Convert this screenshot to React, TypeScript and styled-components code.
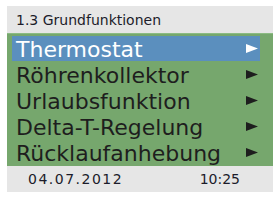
import React from 'react';
import styled, { createGlobalStyle } from 'styled-components';

const items = ['Thermostat', 'Röhrenkollektor', 'Urlaubsfunktion', 'Delta-T-Regelung', 'Rücklaufanhebung'];

function Arrow({ selected }: { selected: boolean }) {
  return (
    <ArrowIcon viewBox="0 0 12 9" width="12" height="9">
      <polygon points="0,0 12,4.5 0,9" fill={selected ? '#ffffff' : '#1e1e1e'} />
    </ArrowIcon>
  );
}

function App() {
  return (
    <>
      <GlobalStyle />
      <Panel>
        <Header>1.3 Grundfunktionen</Header>
        <Menu>
          {items.map((label, i) => (
            <Row key={label} $selected={i === 0}>
              <Label>{label}</Label>
              <Arrow selected={i === 0} />
            </Row>
          ))}
        </Menu>
        <Footer>
          <DateText>04.07.2012</DateText>
          <TimeText>10:25</TimeText>
        </Footer>
      </Panel>
    </>
  );
}

export default App;

const GlobalStyle = createGlobalStyle`
    body {
        margin: 0;
        background: #ffffff;
        font-family: "DejaVu Sans", Verdana, sans-serif;
    }
`;

const Panel = styled.div`
    margin: 6px 0 0 7px;
    width: 266px;
    display: flex;
    flex-direction: column;
`;

const Header = styled.div`
    height: 27px;
    background: #e6e6e6;
    color: #1c1c2a;
    font-size: 14px;
    line-height: 28px;
    padding-left: 9px;
`;

const Menu = styled.div`
    background: #76a76d;
    border-top: 1px solid #8bbb83;
    padding: 2px 13px 1px 5px;
    display: flex;
    flex-direction: column;
    gap: 1px;
`;

const Row = styled.div<{ $selected: boolean }>`
    height: 25px;
    display: flex;
    align-items: center;
    justify-content: space-between;
    padding: 0 2px 0 4px;
    background: ${p => (p.$selected ? '#5b8fbe' : 'transparent')};
    color: ${p => (p.$selected ? '#ffffff' : '#1e1e1e')};
`;

const Label = styled.span`
    font-size: 22px;
    line-height: 25px;
    position: relative;
    top: 1px;
`;

const ArrowIcon = styled.svg`
    display: block;
`;

const Footer = styled.div`
    height: 26px;
    background: #e6e6e6;
    color: #1c1c2a;
    font-size: 14px;
    display: flex;
    align-items: center;
`;

const DateText = styled.span`
    margin-left: 21px;
    letter-spacing: 1.5px;
`;

const TimeText = styled.span`
    margin-left: auto;
    margin-right: 33px;
`;
